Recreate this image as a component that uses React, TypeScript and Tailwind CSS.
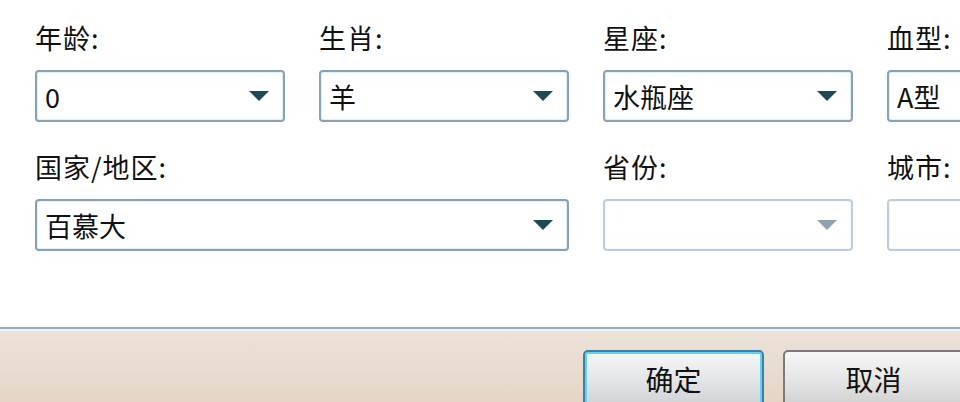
import React from 'react';

interface Field {
  label: string;
  value?: string;
  span?: boolean;
  disabled?: boolean;
}

const ROWS: Field[][] = [
  [
    { label: '年龄:', value: '0' },
    { label: '生肖:', value: '羊' },
    { label: '星座:', value: '水瓶座' },
    { label: '血型:', value: 'A型' },
  ],
  [
    { label: '国家/地区:', value: '百慕大', span: true },
    { label: '省份:', disabled: true },
    { label: '城市:', disabled: true },
  ],
];

function Arrow({ disabled }: { disabled?: boolean }) {
  return (
    <svg width="20" height="10" viewBox="0 0 20 10" className="shrink-0">
      <path d="M0 0h20L10 10z" fill={disabled ? '#8fa2ad' : '#1f4a55'} />
    </svg>
  );
}

function Combo({ field }: { field: Field }) {
  return (
    <div className={field.span ? 'col-span-2 flex flex-col' : 'flex flex-col'}>
      <div className="h-[36px] flex items-center text-[27px] text-[#111] tracking-[1px]">
        {field.label}
      </div>
      <div
        className={`mt-[14px] h-[52px] rounded-[4px] border-2 flex items-center pl-[8px] pr-[14px] ${
          field.disabled
            ? 'border-[#bccdd9] bg-white shadow-[inset_0_0_0_1px_#f3f7fb]'
            : 'border-[#84a3ba] bg-white shadow-[inset_0_0_0_1px_#e4eff9]'
        }`}
      >
        <span className="flex-1 text-[27px] text-[#111] pt-[3px] whitespace-nowrap overflow-hidden">
          {field.value ?? ''}
        </span>
        <Arrow disabled={field.disabled} />
      </div>
    </div>
  );
}

export default function App() {
  return (
    <div
      className="w-[960px] h-[402px] overflow-hidden flex flex-col bg-white"
      style={{ fontFamily: '"Noto Sans CJK SC", "Liberation Sans", sans-serif' }}
    >
      {/* Form fields */}
      <div className="flex-1 pl-[35px] pt-[20px]">
        <div className="grid grid-cols-[250px_250px_250px_250px] gap-x-[34px] gap-y-[27px] w-[1100px]">
          {ROWS.flat().map((f) => (
            <Combo key={f.label} field={f} />
          ))}
        </div>
      </div>

      {/* Separator */}
      <div className="h-[2px] bg-[#9caabb]" />
      <div className="h-[2px] bg-[#eef3fa]" />

      {/* Button bar */}
      <div className="h-[71px] bg-gradient-to-b from-[#ece2d9] to-[#e5d5c6] flex justify-end gap-[19px] pt-[19px] mr-[-4px]">
        <button className="w-[181px] h-[58px] rounded-[5px] border-2 border-[#3a7fa6] bg-gradient-to-b from-[#f6f7f8] via-[#e4e6e8] to-[#cfd2d6] shadow-[inset_0_0_0_2px_#5fd2f7] text-[28px] text-[#111] flex items-center justify-center">
          确定
        </button>
        <button className="w-[181px] h-[58px] rounded-[5px] border-2 border-[#7a7a7a] bg-gradient-to-b from-[#f7f7f7] via-[#e6e6e6] to-[#d0d0d0] text-[28px] text-[#111] flex items-center justify-center">
          取消
        </button>
      </div>
    </div>
  );
}
